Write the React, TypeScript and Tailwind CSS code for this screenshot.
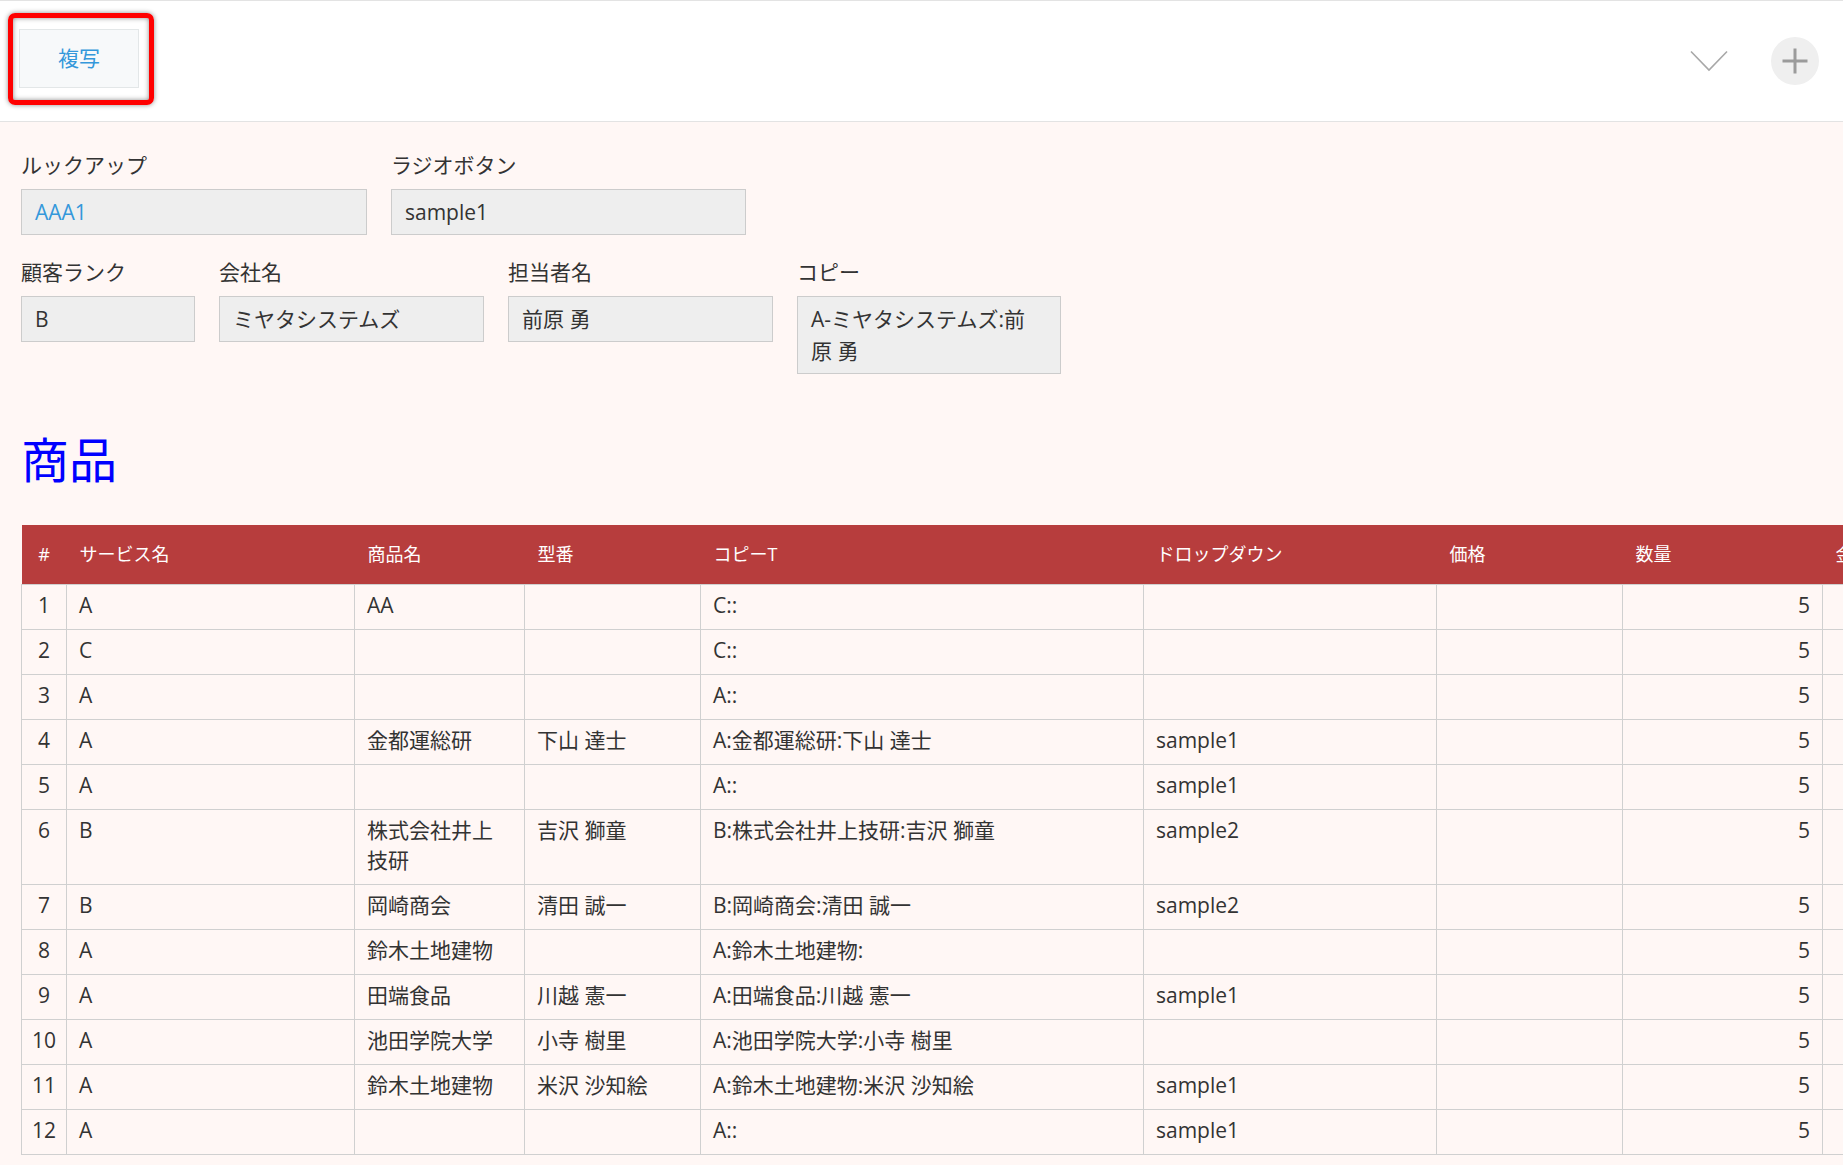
import type { ReactNode } from 'react';

type Row = {
  no: number;
  service: string;
  product: string;
  model: string;
  copy: string;
  dropdown: string;
  qty: string;
};

const rows: Row[] = [
  { no: 1, service: 'A', product: 'AA', model: '', copy: 'C::', dropdown: '', qty: '5' },
  { no: 2, service: 'C', product: '', model: '', copy: 'C::', dropdown: '', qty: '5' },
  { no: 3, service: 'A', product: '', model: '', copy: 'A::', dropdown: '', qty: '5' },
  { no: 4, service: 'A', product: '金都運総研', model: '下山 達士', copy: 'A:金都運総研:下山 達士', dropdown: 'sample1', qty: '5' },
  { no: 5, service: 'A', product: '', model: '', copy: 'A::', dropdown: 'sample1', qty: '5' },
  { no: 6, service: 'B', product: '株式会社井上技研', model: '吉沢 獅童', copy: 'B:株式会社井上技研:吉沢 獅童', dropdown: 'sample2', qty: '5' },
  { no: 7, service: 'B', product: '岡崎商会', model: '清田 誠一', copy: 'B:岡崎商会:清田 誠一', dropdown: 'sample2', qty: '5' },
  { no: 8, service: 'A', product: '鈴木土地建物', model: '', copy: 'A:鈴木土地建物:', dropdown: '', qty: '5' },
  { no: 9, service: 'A', product: '田端食品', model: '川越 憲一', copy: 'A:田端食品:川越 憲一', dropdown: 'sample1', qty: '5' },
  { no: 10, service: 'A', product: '池田学院大学', model: '小寺 樹里', copy: 'A:池田学院大学:小寺 樹里', dropdown: '', qty: '5' },
  { no: 11, service: 'A', product: '鈴木土地建物', model: '米沢 沙知絵', copy: 'A:鈴木土地建物:米沢 沙知絵', dropdown: 'sample1', qty: '5' },
  { no: 12, service: 'A', product: '', model: '', copy: 'A::', dropdown: 'sample1', qty: '5' },
];

interface FieldProps {
  label: string;
  width: string;
  children: ReactNode;
}

function Field({ label, width, children }: FieldProps) {
  return (
    <div className={width}>
      <div className="h-[30px] text-[21px] leading-[28px]">{label}</div>
      <div className="mt-[8px] border border-[#cccccc] bg-[#eeeeee] px-[13px] py-[6px] text-[21px] leading-[32px]">
        {children}
      </div>
    </div>
  );
}

const th = 'h-[59px] bg-[#b73d3d] px-[13px] text-left text-[18px] font-normal text-white';
const td = 'border border-[#d0d0d0] px-[12px] pt-[5px] pb-[9px] align-top text-[21px] leading-[30px]';

function App() {
  return (
    <div className="min-h-screen overflow-hidden bg-[#fff7f5] font-['Open_Sans','Noto_Sans_CJK_JP',sans-serif] text-[#333333]">
      {/* toolbar */}
      <header className="flex h-[122px] items-center justify-between border-y border-[#e3e3e3] bg-white pl-[19px] pr-[24px]">
        <div className="relative self-start mt-[28px]">
          <div className="pointer-events-none absolute -left-[11px] -top-[16px] -right-[15px] -bottom-[17px] rounded-[7px] border-[5px] border-[#ff0000] shadow-[0_0_5px_rgba(0,0,0,0.45),inset_0_0_5px_rgba(0,0,0,0.45)]" />
          <button className="block h-[59px] w-[120px] border border-[#e3e7e8] bg-[#f7f9fa] text-[21px] text-[#3498db]">
            複写
          </button>
        </div>
        <div className="flex items-center gap-[43px]">
          <svg width="38" height="22" viewBox="0 0 38 22" fill="none">
            <path d="M1 1.5 L19 20 L37 1.5" stroke="#a8a8a8" strokeWidth="1.6" />
          </svg>
          <div className="flex h-[48px] w-[48px] items-center justify-center rounded-full bg-[#efefef]">
            <svg width="26" height="26" viewBox="0 0 26 26">
              <path d="M13 0.5 V25.5 M0.5 13 H25.5" stroke="#9b9b9b" strokeWidth="3" />
            </svg>
          </div>
        </div>
      </header>

      <main className="px-[21px] pt-[29px] pb-[12px]">
        <div className="flex gap-[24px]">
          <Field label="ルックアップ" width="w-[346px]">
            <span className="text-[#3498db]">AAA1</span>
          </Field>
          <Field label="ラジオボタン" width="w-[355px]">
            sample1
          </Field>
        </div>

        <div className="mt-[23px] flex items-start gap-[24px]">
          <Field label="顧客ランク" width="w-[174px]">
            B
          </Field>
          <Field label="会社名" width="w-[265px]">
            ミヤタシステムズ
          </Field>
          <Field label="担当者名" width="w-[265px]">
            前原 勇
          </Field>
          <Field label="コピー" width="w-[264px]">
            A-ミヤタシステムズ:前
            <br />
            原 勇
          </Field>
        </div>

        <h2 className="mt-[62px] text-[48px] leading-[48px] font-normal text-[#0000ff]">商品</h2>

        <table className="mt-[41px] w-[2001px] table-fixed border-collapse">
          <colgroup>
            <col className="w-[45px]" />
            <col className="w-[288px]" />
            <col className="w-[170px]" />
            <col className="w-[176px]" />
            <col className="w-[443px]" />
            <col className="w-[293px]" />
            <col className="w-[186px]" />
            <col className="w-[200px]" />
            <col className="w-[200px]" />
          </colgroup>
          <thead>
            <tr>
              <th className={`${th} !px-0 !text-center`}>#</th>
              <th className={th}>サービス名</th>
              <th className={th}>商品名</th>
              <th className={th}>型番</th>
              <th className={th}>コピーT</th>
              <th className={th}>ドロップダウン</th>
              <th className={th}>価格</th>
              <th className={th}>数量</th>
              <th className={th}>金額</th>
            </tr>
          </thead>
          <tbody>
            {rows.map((r) => (
              <tr key={r.no}>
                <td className={`${td} !px-0 text-center`}>{r.no}</td>
                <td className={td}>{r.service}</td>
                <td className={td}>{r.product}</td>
                <td className={td}>{r.model}</td>
                <td className={td}>{r.copy}</td>
                <td className={td}>{r.dropdown}</td>
                <td className={td}></td>
                <td className={`${td} text-right`}>{r.qty}</td>
                <td className={td}></td>
              </tr>
            ))}
          </tbody>
        </table>
      </main>
    </div>
  );
}

export default App;
